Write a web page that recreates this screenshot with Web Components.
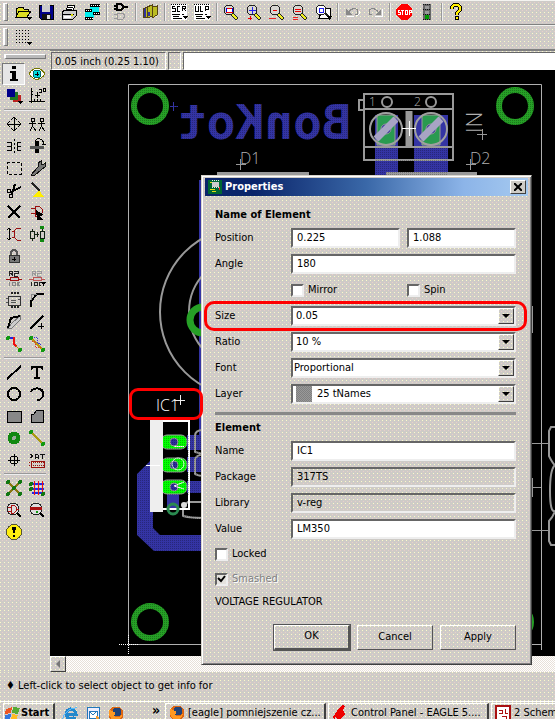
<!DOCTYPE html>
<html lang="en">
<head>
<meta charset="utf-8">
<title>Board editor</title>
<style>
  :root {
    --face: #ceccc6;
    --dither:
      conic-gradient(from 270deg at 1px 1px, #fbfac9 90deg, transparent 0) 0 0 / 4px 4px,
      conic-gradient(from 270deg at 1px 1px, #e9cdcb 90deg, transparent 0) 2px 2px / 4px 4px,
      #cecbc7;
    --light: #fff;
    --shade: #808080;
    --dark: #404040;
  }
  html, body { height: 100%; }
  body {
    margin: 0;
    overflow: hidden;
    font: 11px/14px "DejaVu Sans Condensed", "DejaVu Sans", sans-serif;
    color: #000;
  }
</style>
</head>
<body>
<eagle-app></eagle-app>

<script>
// 16x16 pixel icons
const zoomGlass = (mark) => `
  <circle cx="6" cy="6" r="5" fill="#d8d6d2" stroke="#222"/>
  <path d="M10 9l5 5-2 2-5-5z" fill="#ee2" stroke="#222"/>${mark}`;

const icons = {
  open: `<path d="M1 13V4h2l1-1h4l1 2h4v2M1 13l3-6h12l-4 6z" fill="#dd2" stroke="#000"/><path d="M12 13h5l-2.500 3z"/>`,
  save: `<path d="M1 1h14v14H3l-2-2z" fill="#008" stroke="#000"/><path d="M4 1h8v7H4z" fill="#ccc"/><path d="M4 10h9v5H4z" fill="#111"/><path d="M9 11h3v4H9z" fill="#ddd"/>`,
  print: `<path d="M5 7l2-6h7l-2 6" fill="#fff" stroke="#000"/><path d="M1 8l3-2h11v6l-3 3H1z" fill="#ccc" stroke="#000"/><path d="M2 10h11M7 3h5M6 5h5" stroke="#000"/><path d="M3 12h7v2H3z" fill="#fff"/><path d="M10 10h2v2h-2z" fill="#dd0"/>`,
  film: `<path d="M6 1h9v8H6zM1 7h9v7H1z" fill="#0ee"/><path d="M6 0h10v3H6zM1 5h7v3H1zM1 13h8v3H1zM9 8h7v3H9z" fill="#000"/><path d="M7 1.500h9M2 6.500h6M2 14.500h7M10 9.500h6" stroke="#fff" stroke-dasharray="1 1"/>`,
  gate: `<path d="M4 0h4l3 3-3 3H4zM1 2h3M1 5h3M11 3h4" fill="none" stroke="#000" stroke-width="1.500"/><path d="M4 9h6l2 3-2 3H4zM1 10h3M1 14h3" fill="none" stroke="#999"/>`,
  books: `<path d="M1 5l4-2v10l-3 1zM5 3l5-2v11l-4 2zM10 3l5-1v9l-5 3z" fill="#bb2" stroke="#541"/><path d="M2 5l2-1v9H2zM7 4l1 8H6z" fill="#339"/>`,
  scr: `<path d="M0 0h16v16H0z" fill="#fff"/><path d="M0 0h16" stroke="#000" stroke-dasharray="1 1"/><path d="M4 2H1v2h3v3H1M9 2H6v5h3M11 7V2h3v2h-3M12 4l3 3" fill="none" stroke="#000"/><path d="M1 10h8M11 10h2M2 12h6M2 14h9" stroke="#000"/><path d="M12 12h5l-2.500 3z"/>`,
  ulp: `<path d="M0 0h16v16H0z" fill="#fff"/><path d="M0 0h16" stroke="#000" stroke-dasharray="1 1"/><path d="M1 2v5h3V2M6 2v5h3M11 7V2h3v3h-3" fill="none" stroke="#000"/><path d="M1 10h8M11 10h2M2 12h6M2 14h9" stroke="#000"/><path d="M12 12h5l-2.500 3z"/>`,
  fit: zoomGlass(`<path d="M3 4h6v4H3z" fill="#fff" stroke="#e00"/><path d="M3 4v4M9 4v4" stroke="#00e"/>`),
  zin: zoomGlass(`<path d="M3 6h7M6 3v7" stroke="#22e"/><path d="M2 14h4M4 12v4" stroke="#e00"/>`),
  zout: zoomGlass(`<path d="M4 6h4" stroke="#e00"/><path d="M0 14h7" stroke="#e22"/>`),
  zredraw: zoomGlass(`<path d="M3 5h6M3 7h6" stroke="#e00"/><path d="M1 13h5M1 15h5" stroke="#e22"/>`),
  zselect: `<path d="M8 4h7v10H4z" fill="#fff" stroke="#000"/><circle cx="6" cy="6" r="5" fill="#fff" stroke="#222"/><path d="M4 4h4v4H4z" fill="#fff" stroke="#22e"/><path d="M10 9l4 4" stroke="#222" stroke-width="2"/><path d="M12 12h5l-2.500 4z"/>`,
  undo: `<path d="M2 5v6h6z" fill="#888"/><path d="M5 8c3-5 9-4 9 0 0 2-1 3-3 3" fill="none" stroke="#888"/><path d="M3 12h7M12 12c3-1 4-3 3-5" fill="none" stroke="#fff"/>`,
  redo: `<path d="M14 5v6H8z" fill="#888"/><path d="M11 8C8 3 2 4 2 8c0 2 1 3 3 3" fill="none" stroke="#888"/><path d="M15 5v7H8" fill="none" stroke="#fff"/>`,
  stop: `<path d="M5 0h6l5 5v6l-5 5H5l-5-5V5z" fill="#f00"/><path d="M4 6H2v2h2v2H2M5 6h3M6.500 6v5M9 6h2v4H9zM13 11V6h2v2h-2" fill="none" stroke="#fff"/>`,
  light: `<path d="M4 0h8v16H4z" fill="#666"/><path d="M4 .5h8M4 15.500h8M4 5h8M4 10h8" stroke="#111" stroke-dasharray="1 1"/><path d="M6 2h4v3H6zM6 7h4v3H6z" fill="#999"/><path d="M6 11h4v4H6z" fill="#090"/>`,
  help: `<path d="M4 5V3l2-2h4l2 2v3L9 9v2" fill="none" stroke="#000" stroke-width="4"/><path d="M4 5V3l2-2h4l2 2v3L9 9v2" fill="none" stroke="#fe0" stroke-width="2"/><path d="M7 12h4v4H7z"/><path d="M8 13h2v2H8z" fill="#fe0"/>`,
  grid: `<g stroke="#000" stroke-dasharray="1 2"><path d="M1 1.500h14M1 4.500h14M1 7.500h14M1 10.500h14M1 13.500h12"/></g><path d="M12 13h5l-2.500 3z"/>`,
  info: `<path d="M6 0h4v3H6zM4 5h6v8h2v2H4v-2h2V7H4z"/>`,
  show: `<path d="M0 8c5-8 11-8 16 0-5 7-11 7-16 0z" fill="#fff" stroke="#770"/><circle cx="8" cy="8" r="4" fill="#0dd" stroke="#066"/><path d="M6 8h4M8 6v4" stroke="#000"/>`,
  display: `<path d="M7 7h8v7H7z" fill="#b22"/><path d="M4 4h8v8H4z" fill="#272"/><path d="M1 1h8v8H1z" fill="#008"/><path d="M11 13h6l-3 3z"/>`,
  mark: `<path d="M2 0v15M0 13h16M2 3h2M2 6h2M5 13v-2M8 13v-2M11 13v-2M6 7h5M8.500 4v6M10 1h2v3h-2M14 0h2v3h-2z" fill="none" stroke="#000"/>`,
  move: `<path d="M8 1v14M1 8h14M5 4l3-3 3 3M5 12l3 3 3-3M4 5L1 8l3 3M12 5l3 3-3 3" fill="none" stroke="#000"/>`,
  copy: `<path d="M2 2h3v3H2zM3.500 5v6M0 7h7M3.500 10L1 15M3.500 10L7 15M11 2h3v3h-3zM12.500 5v6M9 7h7M12.500 10L10 15M12.500 10l3 5" fill="none" stroke="#000"/>`,
  mirror: `<path d="M8 1v14" stroke="#000" stroke-dasharray="2 2"/><path d="M1 4h4v8H1M1 8h4M15 4h-4v8h4M15 8h-4" fill="none" stroke="#000"/>`,
  rotate: `<path d="M6 3h4v12H6z"/><path d="M1 8h14v3H1z" fill="#555"/><path d="M8 1c4-1 7 2 7 6M6 3l3-3M13 6h4" fill="none" stroke="#000"/>`,
  group: `<path d="M1 2h14v12H1z" fill="none" stroke="#000" stroke-dasharray="3 2"/>`,
  change: `<path d="M2 15l7-8V3l3-2v3l2 1 2-2v4l-4 3-7 6z" fill="#777" stroke="#111"/>`,
  cut: `<path d="M15 5L5 10M9 2L6 12" stroke="#000" stroke-width="2"/><circle cx="3" cy="9" r="2" fill="none" stroke="#000"/><circle cx="5" cy="14" r="2" fill="none" stroke="#000"/>`,
  paste: `<path d="M3 1l8 8" stroke="#222" stroke-width="2"/><path d="M3 15l7-7 5 7z" fill="#fe0"/>`,
  del: `<path d="M2 2l12 12M14 2L2 14" stroke="#000" stroke-width="2"/>`,
  add: `<path d="M2 4h4V2h4l3 3v4M2 9h4v3h4M6 4v8" fill="none" stroke="#911"/><path d="M7 6l8 5-4 1 3 4H8z"/>`,
  pinswap: `<path d="M3 2v12M1 4l2-2 2 2M1 12l2 2 2-2" fill="none" stroke="#000"/><path d="M15 2h-4l-3 3v6l3 3h4M8 5H6M8 11H6" fill="none" stroke="#911"/>`,
  replace: `<path d="M1 5h4v7H1zM11 5h4v7h-4zM3 3v2M3 12v3M6 8h4M8 6v5M13 3v2M13 12v3" fill="none" stroke="#121"/><path d="M11 0h4v3h-4zM11 13h4v3h-4z" fill="#181"/>`,
  lock: `<path d="M5 8V4l2-2h2l2 2v4" fill="none" stroke="#555" stroke-width="2"/><path d="M3 7h10v7H3z" fill="#777" stroke="#333"/><path d="M8 9v4M6 11h4" stroke="#000"/>`,
  name: `<path d="M3 6V1h3v2H3M5 3l2 3M8 1h4v2.500H8V6h4" fill="none" stroke="#222"/><path d="M0 9h16" stroke="#911"/><path d="M4 7.500h8v3H4z" fill="#ccc" stroke="#911"/><path d="M3 12v4M6 12h3v3H6zM11 12v4M14 12l-3 2 3 2" fill="none" stroke="#888"/>`,
  value: `<path d="M3 6V1h3v2H3M5 3l2 3M8 1h4v2.500H8V6h4" fill="none" stroke="#999"/><path d="M0 9h16" stroke="#b55"/><path d="M4 7.500h8v3H4z" fill="#ccc" stroke="#b55"/><path d="M2 12v4M5 12h3v3H5zM10 12v4M12 12l-2 2 2 2" fill="none" stroke="#222"/><path d="M12 12h5l-2.500 4z"/>`,
  smash: `<path d="M2 4h12v9H2z" fill="none" stroke="#333"/><path d="M5 8h5M5 10h5M0 6h2M0 10h2M12 7h2" stroke="#555"/><path d="M5 1h9M5 15h9" stroke="#222" stroke-width="2" stroke-dasharray="2 1"/>`,
  miter: `<path d="M2 15V9l6-7h7" fill="none" stroke="#000" stroke-width="2"/><path d="M2 8V2h6" fill="none" stroke="#888"/>`,
  split: `<path d="M2 14h4l8-8V2L6 9z" fill="#ccc" stroke="#777"/><path d="M2 14L5 4l9-2" fill="none" stroke="#000" stroke-width="2"/>`,
  optimize: `<path d="M1 15L14 2" stroke="#000" stroke-width="2"/><path d="M9 12h6M12 9v6" stroke="#000"/>`,
  route: `<path d="M2 2h5" stroke="#22d" stroke-width="2"/><path d="M8 1v7l3 3" fill="none" stroke="#e11" stroke-width="2"/><path d="M10 10l4 4" stroke="#a90"/><circle cx="2" cy="2" r="2" fill="#191"/><circle cx="14" cy="14" r="2" fill="#191"/>`,
  ripup: `<path d="M2 2l12 12" stroke="#b91" stroke-width="2"/><path d="M5 1h3v5l5 4" fill="none" stroke="#33d" stroke-dasharray="1 1"/><path d="M3 5h3v6h6" fill="none" stroke="#d33" stroke-dasharray="1 1"/><circle cx="2" cy="2" r="2" fill="#191"/><circle cx="14" cy="14" r="2" fill="#191"/>`,
  wire: `<path d="M1 15L15 2" stroke="#000" stroke-width="2"/>`,
  text: `<path d="M2 2h12v4h-1l-1-2H9v9h2v2H5v-2h2V4H4L3 6H2z"/>`,
  circle: `<circle cx="8" cy="8" r="6" fill="none" stroke="#000" stroke-width="2"/>`,
  arc: `<path d="M2 6c2-5 12-5 12 2 0 4-3 6-6 6" fill="none" stroke="#000" stroke-width="2"/>`,
  rect: `<path d="M1 3h14v11H1z" fill="#888" stroke="#000"/>`,
  polygon: `<path d="M2 14V7l3-1 3-4h6v12z" fill="#888" stroke="#000"/>`,
  via: `<circle cx="8" cy="8" r="6.500" fill="#181"/><circle cx="8" cy="8" r="2" fill="#9a9"/>`,
  signal: `<path d="M2 2l12 12" stroke="#a91" stroke-width="2"/><circle cx="2" cy="2" r="2" fill="#191"/><circle cx="14" cy="14" r="2" fill="#191"/>`,
  hole: `<circle cx="8" cy="8" r="4" fill="none" stroke="#000"/><path d="M8 2v12M2 8h12" stroke="#000"/>`,
  attribute: `<path d="M1 2l3 2-3 2M6 7V3l2-1 1 1v4M6 5h3M11 2h5M13.500 2v5" fill="none" stroke="#111"/><path d="M2 9h13v6H2z" fill="none" stroke="#911"/><path d="M0 10.500h16M0 13.500h16" stroke="#911" stroke-dasharray="1 1"/>`,
  ratsnest: `<path d="M2 2l12 12M14 2L2 14" stroke="#871" stroke-width="1.500"/><g fill="#171"><circle cx="2" cy="2" r="2"/><circle cx="14" cy="2" r="2"/><circle cx="8" cy="8" r="2"/><circle cx="2" cy="14" r="2"/><circle cx="14" cy="14" r="2"/></g>`,
  auto: `<path d="M3 4h12M3 9h12M3 13h12" stroke="#22e" stroke-width="2"/><path d="M5 1v14M9 1v14M13 1v14" stroke="#e11"/><g fill="#171"><circle cx="2" cy="4" r="2"/><circle cx="2" cy="9" r="2"/><circle cx="14" cy="14" r="2"/></g>`,
  erc: `<circle cx="7" cy="7" r="6" fill="#ddd" stroke="#222"/><path d="M2 5h3M2 9h3M5 3v8h3l2-2V5L8 3zM10 7h3" fill="none" stroke="#a11"/><path d="M11 11l4 4" stroke="#000" stroke-width="2"/>`,
  drc: `<circle cx="7" cy="7" r="6" fill="#ddd" stroke="#222"/><path d="M1 6h12" stroke="#a11" stroke-width="3"/><circle cx="8" cy="10" r="1.500" fill="#191"/><path d="M11 11l4 4" stroke="#000" stroke-width="2"/>`,
  errors: `<circle cx="8" cy="8" r="7.500" fill="#fe1" stroke="#553"/><path d="M6 3h4L9 9H7zM7 11h2v2H7z"/>`,
  board: `<path d="M0 0h16v16H0z" fill="#063"/><path d="M5 2h7v6H5z" fill="#ccc"/><path d="M5 1h7M5 8h7" stroke="#fff" stroke-dasharray="1 1"/><path d="M2 3h2M2 11h6M4 13h5" stroke="#fe1"/><path d="M12 8h2v3h-2z" fill="#e22"/>`,
  windows: `<path d="M1 4l6-2-1 6-6 1z" fill="#e52"/><path d="M8 2l7 1-2 6-6-1z" fill="#5a3"/><path d="M0 10l6-1-1 6-5 1z" fill="#37d"/><path d="M7 9l6 1-2 6-5-1z" fill="#fb2"/>`,
  ie: `<path d="M13 11a5 5 0 1 1 1-3H4" fill="none" stroke="#28c" stroke-width="3"/><path d="M1 14C0 9 8 1 15 2" fill="none" stroke="#5bf"/>`,
  mail: `<path d="M2 1h12v14H2z" fill="#eef" stroke="#27b"/><path d="M4 5h8v7H4z" fill="#fff" stroke="#27b"/><path d="M4 5l4 4 4-4" fill="none" stroke="#27b"/><path d="M12 9l4 6h-6z" fill="#e93"/>`,
  firefox: `<circle cx="8" cy="8" r="7.500" fill="#d61"/><circle cx="9" cy="6" r="4.500" fill="#247"/><path d="M1 4c3 0 3 2 6 2 1 2-1 2-1 4 3 3 6 1 8-2 0 5-4 7-7 7S0 10 1 4z" fill="#f92"/>`,
  eagle: `<path d="M10 0l3 1-2 4 2 4-3 4-4 2-3-3 1 4-3-4 4-6z" fill="#e00"/>`,
  schematic: `<path d="M1 1h14v14H1z" fill="#fff" stroke="#a11" stroke-width="2"/><path d="M4 5h3v3H4M10 4v4h3M7 11h4v3" fill="none" stroke="#a11"/>`,
};

class PixelIcon extends HTMLElement {
  connectedCallback() {
    this.attachShadow({ mode: "open" }).innerHTML = `
      <style>
        :host { display: inline-block; width: 16px; height: 16px; flex: none; }
        svg { display: block; width: 100%; height: 100%; overflow: visible; shape-rendering: crispEdges; }
      </style>
      <svg viewBox="0 0 16 16" aria-hidden="true">${icons[this.getAttribute("name")]}</svg>`;
  }
}

// Toolbar: "tools" is a space separated list of icon names, "|" makes a separator, "-" an empty cell
class ToolBar extends HTMLElement {
  connectedCallback() {
    const pressed = this.getAttribute("pressed");
    const items = this.getAttribute("tools").split(" ").map((t) => {
      if (t === "|") return `<i></i>`;
      if (t === "-") return `<span></span>`;
      return `<button type="button" aria-label="${t}"${t === pressed ? ' class="on"' : ""}><pixel-icon name="${t}"></pixel-icon></button>`;
    });
    this.attachShadow({ mode: "open" }).innerHTML = `
      <style>
        :host { display: flex; align-items: center; height: 25px; box-sizing: border-box; padding-left: 3px;
                background: var(--dither); border-bottom: 1px solid var(--shade); box-shadow: inset 0 1px #f4f4f0; }
        b { width: 5px; height: 18px; margin-right: 3px; border: 1px solid; box-sizing: border-box;
            border-color: #fff #777 #777 #fff; border-left-width: 2px; background: #bbb; }
        button { width: 23px; height: 22px; padding: 0; border: 0; background: none;
                 display: flex; align-items: center; justify-content: center; }
        i { width: 1px; height: 18px; margin: 0 2px 0 3px; background: #999; box-shadow: 1px 0 #eee; }
        :host([vertical]) { display: grid; grid-template-columns: 23px 23px; align-content: start;
                            height: auto; padding: 4px 0 0 2px; border: 0; box-shadow: none; }
        :host([vertical]) b { grid-column: span 2; width: 42px; height: 5px; margin: 0 2px 4px; }
        :host([vertical]) i { grid-column: span 2; width: 42px; height: 1px; margin: 2px 2px 3px; box-shadow: 0 1px #eee; }
        .on { background: #e6e6e6; border: 1px solid; border-color: #777 #fff #fff #777; }
      </style>
      <b></b>${items.join("")}`;
  }
}

class CoordBar extends HTMLElement {
  connectedCallback() {
    this.attachShadow({ mode: "open" }).innerHTML = `
      <style>
        :host { display: flex; gap: 2px; height: 20px; box-sizing: border-box; padding: 1px 0 0 1px;
                background: var(--dither); border-top: 1px solid var(--shade); }
        div, input { border: 1px solid; border-color: #666 #fff #fff #666; box-sizing: border-box; }
        .pos { width: 115px; padding: 2px 3px; white-space: nowrap; }
        .gap { width: 13px; }
        input { flex: 1; min-width: 0; padding: 0 4px; font: inherit; background: #fff; border-right: 0; }
      </style>
      <div class="pos"><slot></slot></div>
      <div class="gap"></div>
      <input type="text" aria-label="Command">`;
  }
}

class BoardView extends HTMLElement {
  connectedCallback() {
    const ring = (x, y) => `<circle cx="${x}" cy="${y}" r="16" fill="none" stroke="#26a026" stroke-width="6"/>`;
    const screw = (x) => `
      <path d="M${x - 9} 115h18v30h-18z" fill="#2a9a50"/>
      <circle cx="${x}" cy="129" r="5" fill="#2e2e9c"/>
      <path d="M${x - 10} 139l20-20" stroke="#a8a4c4" stroke-width="7"/>
      <circle cx="${x}" cy="129" r="16" fill="none" stroke="#a0a0a0" stroke-width="2"/>`;
    const pad = (y) => `
      <rect x="161" y="${y}" width="26" height="14" rx="6" fill="#0f0"/>
      <circle cx="174" cy="${y + 7}" r="4" fill="#2e2e9c"/>`;
    this.attachShadow({ mode: "open" }).innerHTML = `
      <style>
        :host { display: block; background: #000; overflow: hidden; min-height: 0; }
        svg { display: block; width: 100%; height: 100%; }
        text { font-family: "Open Sans", sans-serif; font-weight: 300; font-size: 16px; fill: #b0b0b0; }
        .name { font: bold 48px "DejaVu Sans Mono", monospace; fill: #3434a4; }
      </style>
      <svg role="img" aria-label="Board">
        <defs>
          <pattern id="dots" width="2" height="2" patternUnits="userSpaceOnUse"><path d="M0 0h1v1H0z" fill="#000" fill-opacity=".25"/></pattern>
        </defs>
        <g transform="translate(-50 -70)" fill="none" stroke="#999">
          <g stroke="none" fill="#3434a4">
            <path d="M375 115h23v60h-23zM414 115h34v60h-34z"/>
            <path d="M187 435h16v15h-16zM187 457h16v15h-16zM187 481h16v12h-16zM167 494h12v14h-12zM199 180h4v270h-4z"/>
            <path d="M163 457l-13 4-13 13v61l17 16h50v-16h-44l-7-7v-60l10-3z"/>
          </g>
          <path d="M541.500 650V84.500H128.500V644.500H541" stroke="#b0b0b0"/>
          <path d="M119 644.500h20M128.500 635v20" stroke="#fff" stroke-dasharray="1 1"/>
          ${ring(150, 106)}${ring(515, 106)}${ring(150, 622)}${ring(515, 622)}
          <circle cx="245" cy="312" r="85" stroke-width="2"/>
          <circle cx="245" cy="312" r="56" stroke-width="2"/>
          <circle cx="203" cy="320" r="13" stroke="#26a026" stroke-width="7"/>
          <path d="M170 106.500h8M173.500 102v9" stroke="#3434a4"/>
          <text class="name" stroke="none" transform="translate(351 139) scale(-1 1)">BonKot</text>
          <path d="M364 94h89v66h-89zM364 109h89M364 147h89M364 100h-5v10h5" stroke-width="2"/>
          <path d="M409 111v36" stroke-width="7"/>
          <circle cx="387" cy="102" r="5" stroke-width="2"/>
          <circle cx="431" cy="102" r="5" stroke-width="2"/>
          ${screw(386)}${screw(431)}
          <path d="M402 128.500h14M409.500 121v15" stroke="#fff"/>
          <g stroke="none">
            <text x="369" y="106" style="font-size:12px">1</text>
            <text x="414" y="106" style="font-size:12px">2</text>
            <text x="240" y="164">D1</text>
            <text x="470" y="164">D2</text>
            <text transform="translate(482 133) rotate(-90)" style="font-size:22px">IN</text>
          </g>
          <path d="M236 164.500h10M240.500 159v11M466 164.500h10M470.500 159v11M477 134.500h10M482.500 129v11"/>
          <path d="M217 173.500h92M386 173.500h91" stroke-width="3"/>
          <path d="M203 430q-8 0-8 6v16q8 2 8 2q-8 2-8 6v14q4 2 8 2M203 502h-15l-5 4v10q8 2 20 2" stroke-width="2"/>
          ${pad(435)}${pad(458)}${pad(480)}
          <path d="M150 420h13v92h-13z" fill="#eee" stroke="none"/>
          <path d="M163 421h26v88h-26" stroke="#fff" stroke-width="2"/>
          <path d="M146 465.500h14M174 446.500h10M184 489l-10-3 10-4" stroke="#fff"/>
          <circle cx="178" cy="464" r="6" stroke="#dfd"/>
          <circle cx="173" cy="509" r="5" stroke="#2a8a50" stroke-width="3"/>
          <circle cx="184" cy="505" r="3" fill="#ddd" stroke="none"/>
          <g stroke="none"><text x="156" y="411" style="fill:#fff">IC1</text></g>
          <path d="M174 400.500h11M180.500 395v10" stroke="#eee"/>
          <path d="M532 443.500h16M532 530.500h16M532.500 306v27M532.500 478v19M532 487.500h9"/>
          <path d="M555 427h-4l-2 4v25q4 8 6 9q-5 4-5 26t5 20q-2 6-6 10v20l2 4h4" stroke-width="2"/>
          <path d="M130 86h38v40h-38zM174 104h178v38H174zM136 435h14v120h-14zM150 515h53v38h-53zM164 435h37v60h-37zM375 147h73v28h-73zM130 600h44v43h-44zM495 86h44v40h-44z" fill="url(#dots)" stroke="none"/>
        </g>
      </svg>`;
  }
}

class ScrollStrip extends HTMLElement {
  connectedCallback() {
    this.attachShadow({ mode: "open" }).innerHTML = `
      <style>
        :host { display: block; height: 16px; background: repeating-conic-gradient(#fff 0 25%, #e8e0d8 0 50%) 0 0 / 2px 2px; }
        button { display: block; width: 16px; height: 16px; padding: 0; background: var(--dither);
                 border: 1px solid; border-color: #fff var(--dark) var(--dark) #fff; }
        svg { display: block; margin: auto; }
      </style>
      <button type="button" aria-label="Scroll left"><svg width="8" height="8"><path d="M6 0v8L2 4z" fill="#777"/></svg></button>`;
  }
}

const boxStyle = `
  input, select {
    box-sizing: border-box; width: 100%; min-width: 0; height: 20px; margin: 0; padding: 0 4px 1px;
    font: inherit; color: #000; background: #fff; border-radius: 0;
    border: 2px solid; border-color: #666 #eee #eee #666; outline: 0; appearance: none;
  }`;

// Label with one or two text boxes
class PropField extends HTMLElement {
  connectedCallback() {
    const label = this.getAttribute("label");
    const values = this.getAttribute("value").split(" ");
    const ro = this.hasAttribute("readonly") ? "readonly" : "";
    const inputs = values.map((v, i) =>
      `<input type="text" value="${v}" ${ro} ${i ? `aria-label="${label} ${i + 1}"` : 'id="box"'}>`);
    this.attachShadow({ mode: "open" }).innerHTML = `
      <style>
        :host { display: grid; grid-template-columns: 76px 1fr; align-items: center; }
        div { display: flex; gap: 7px; }
        ${boxStyle}
        input[readonly] { background: var(--dither); }
      </style>
      <label for="box">${label}</label><div>${inputs.join("")}</div>`;
  }
}

class PropSelect extends HTMLElement {
  connectedCallback() {
    const swatch = this.hasAttribute("swatch");
    this.attachShadow({ mode: "open" }).innerHTML = `
      <style>
        :host { display: grid; grid-template-columns: 76px 1fr; align-items: center; }
        ${boxStyle}
        .wrap { display: grid; align-items: center; }
        .wrap > * { grid-area: 1 / 1; }
        select { padding: 0 20px 1px ${swatch ? 24 : this.getAttribute("inset") || 3}px; }
        .swatch { width: 16px; height: 16px; margin-left: 5px; pointer-events: none;
                  background: repeating-conic-gradient(#999 0 25%, #808080 0 50%) 0 0 / 2px 2px; }
        .arrow { justify-self: end; width: 16px; height: 16px; margin-right: 2px; box-sizing: border-box; pointer-events: none;
                 background: var(--dither); border: 1px solid; border-color: #fff var(--dark) var(--dark) #fff; }
        .arrow svg { display: block; margin: 5px auto; }
      </style>
      <label for="box">${this.getAttribute("label")}</label>
      <div class="wrap">
        <select id="box"><option>${this.getAttribute("value")}</option></select>
        ${swatch ? '<span class="swatch"></span>' : ""}
        <span class="arrow"><svg width="8" height="4"><path d="M0 0h8L4 4z"/></svg></span>
      </div>`;
  }
}

class PropCheck extends HTMLElement {
  connectedCallback() {
    const flags = ["checked", "disabled"].filter((f) => this.hasAttribute(f)).join(" ");
    this.attachShadow({ mode: "open" }).innerHTML = `
      <style>
        :host { display: block; }
        label { display: flex; align-items: center; gap: 4px; }
        input { appearance: none; width: 13px; height: 13px; margin: 0; box-sizing: border-box; background: #fff;
                border: 2px solid; border-color: #666 #eee #eee #666; }
        .box { display: grid; place-items: center; }
        .box > * { grid-area: 1 / 1; }
        svg { display: none; }
        :checked + svg { display: block; }
        :host([disabled]) input { background: #e4e2de; }
        :host([disabled]) label { color: #808080; text-shadow: 1px 1px #fff; }
      </style>
      <label><span class="box"><input type="checkbox" ${flags}><svg width="9" height="9"><path d="M1 3l3 3 4-5" fill="none" stroke="#000" stroke-width="2"/></svg></span><slot></slot></label>`;
  }
}

class PushButton extends HTMLElement {
  connectedCallback() {
    this.attachShadow({ mode: "open" }).innerHTML = `
      <style>
        :host { display: block; }
        button { width: 76px; height: 25px; padding: 0 0 2px; font: inherit; color: #000; background: var(--dither);
                 border: 1px solid; border-color: #fff #555 #555 #fff; border-radius: 0; }
        :host([default]) button { border-right-width: 2px; border-bottom-width: 2px; outline: 1px solid #555; }
      </style>
      <button type="button"><slot></slot></button>`;
  }
}

class PropertiesDialog extends HTMLElement {
  connectedCallback() {
    this.attachShadow({ mode: "open" }).innerHTML = `
      <style>
        :host { display: block; box-sizing: border-box; background: var(--dither); padding: 2px 3px 14px;
                border: 1px solid; border-color: #d8d4cc #404040 #404040 #d8d4cc;
                box-shadow: inset 1px 1px #fff, inset -1px -1px #808080; }
        header { display: flex; align-items: center; height: 18px; padding: 0 2px 0 3px;
                 color: #fff; font-weight: bold; background: linear-gradient(90deg, #0a246a 15%, #3a68a8 50%, #8cb4e8 80%, #a6caf0); }
        header span { flex: 1; padding-left: 3px; }
        pixel-icon { width: 14px; height: 14px; }
        header button { width: 16px; height: 14px; padding: 0; border: 1px solid; border-color: #fff #404040 #404040 #fff; background: var(--face); }
        header svg { display: block; margin: auto; }
        form { display: flex; flex-direction: column; gap: 6px; padding: 12px 12px 0 10px; }
        h2 { margin: 0; font: inherit; font-weight: bold; }
        .checks { display: grid; grid-template-columns: 1fr 1fr; height: 20px; align-items: center; margin-left: 76px; gap: 7px; }
        hr { width: 100%; height: 3px; margin: 2px 0 0; border: 0; background: #888; }
        .foot { display: flex; justify-content: flex-end; gap: 7px; margin-top: 10px; }
        .single { padding: 2px 0 3px; }
        p { margin: 0; }
        .mark { position: relative; }
        .mark::after { content: ""; position: absolute; inset: -5px -11px; border: 3px solid #f00; border-radius: 10px; pointer-events: none; }
      </style>
      <header>
        <pixel-icon name="board"></pixel-icon><span>Properties</span>
        <button type="button" aria-label="Close"><svg width="8" height="8"><path d="M0 0l8 8M8 0L0 8" stroke="#000" stroke-width="2"/></svg></button>
      </header>
      <form>
        <h2>Name of Element</h2>
        <prop-field label="Position" value="0.225 1.088"></prop-field>
        <prop-field label="Angle" value="180"></prop-field>
        <div class="checks"><prop-check>Mirror</prop-check><prop-check>Spin</prop-check></div>
        <prop-select class="mark" label="Size" value="0.05"></prop-select>
        <prop-select label="Ratio" value="10 %"></prop-select>
        <prop-select label="Font" value="Proportional" inset="1"></prop-select>
        <prop-select label="Layer" value="25 tNames" swatch></prop-select>
        <hr>
        <h2>Element</h2>
        <prop-field label="Name" value="IC1"></prop-field>
        <prop-field label="Package" value="317TS" readonly></prop-field>
        <prop-field label="Library" value="v-reg" readonly></prop-field>
        <prop-field label="Value" value="LM350"></prop-field>
        <prop-check class="single">Locked</prop-check>
        <prop-check class="single" checked disabled>Smashed</prop-check>
        <p>VOLTAGE REGULATOR</p>
        <div class="foot">
          <push-button default>OK</push-button><push-button>Cancel</push-button><push-button>Apply</push-button>
        </div>
      </form>`;
  }
}

class TaskBar extends HTMLElement {
  connectedCallback() {
    this.attachShadow({ mode: "open" }).innerHTML = `
      <style>
        :host { display: flex; align-items: flex-start; height: 18px; box-sizing: border-box; padding: 1px 0 0 3px; overflow: hidden;
                background: var(--dither); border-top: 1px solid #fff; }
        button { display: flex; align-items: center; gap: 3px; height: 20px; padding: 0 2px; font: inherit; color: #000; white-space: nowrap;
                 background: var(--dither); border: 1px solid; border-color: #fff #404040 #404040 #fff; border-right-width: 2px; }
        .start { font-weight: bold; width: 52px; flex: none; gap: 0; padding: 0 1px; }
        nav { display: flex; flex: none; gap: 7px; padding: 3px 0 0 7px; width: 97px; box-sizing: border-box; }
        .more { flex: none; font-size: 14px; font-weight: bold; width: 13px; line-height: 14px; }
        .task { width: 161px; flex: none; margin-right: 2px; padding-left: 3px; gap: 3px; }
      </style>
      <button class="start" type="button"><pixel-icon name="windows"></pixel-icon>Start</button>
      <nav><pixel-icon name="ie"></pixel-icon><pixel-icon name="mail"></pixel-icon><pixel-icon name="firefox"></pixel-icon></nav>
      <span class="more">»</span>
      <button class="task" type="button"><pixel-icon name="firefox"></pixel-icon>[eagle] pomniejszenie cz...</button>
      <button class="task" type="button"><pixel-icon name="eagle"></pixel-icon>Control Panel - EAGLE 5....</button>
      <button class="task" type="button"><pixel-icon name="schematic"></pixel-icon>2 Schem</button>`;
  }
}

class EagleApp extends HTMLElement {
  connectedCallback() {
    this.attachShadow({ mode: "open" }).innerHTML = `
      <style>
        :host { display: flex; flex-direction: column; height: 100%; position: relative; background: var(--dither); overflow: hidden; }
        main { flex: 1; min-height: 0; display: grid; grid-template-columns: 50px 1fr; }
        section { display: flex; flex-direction: column; min-height: 0; min-width: 0; }
        board-view { flex: 1; }
        footer { height: 29px; box-sizing: border-box; padding: 7px 6px; background: var(--dither); }
        properties-dialog { position: absolute; left: 201px; top: 175px; width: 331px; }
        .callout { position: absolute; left: 129px; top: 388px; width: 74px; height: 32px; box-sizing: border-box;
                   border: 3px solid #f00; border-radius: 9px; pointer-events: none; }
      </style>
      <tool-bar tools="open save print film | gate | books | scr ulp | fit zin zout zredraw zselect | undo redo | stop light | help"></tool-bar>
      <tool-bar tools="grid"></tool-bar>
      <main>
        <tool-bar vertical pressed="info" tools="info show display mark | move copy mirror rotate group change cut paste del add pinswap replace lock - name value smash miter split optimize route ripup | wire text circle arc rect polygon via signal hole attribute | ratsnest auto erc drc errors"></tool-bar>
        <section>
          <coord-bar>0.05 inch (0.25 1.10)</coord-bar>
          <board-view></board-view>
          <scroll-strip></scroll-strip>
        </section>
      </main>
      <footer>♦ Left-click to select object to get info for</footer>
      <task-bar></task-bar>
      <properties-dialog></properties-dialog>
      <div class="callout"></div>`;
  }
}

customElements.define("pixel-icon", PixelIcon);
customElements.define("tool-bar", ToolBar);
customElements.define("coord-bar", CoordBar);
customElements.define("board-view", BoardView);
customElements.define("scroll-strip", ScrollStrip);
customElements.define("prop-field", PropField);
customElements.define("prop-select", PropSelect);
customElements.define("prop-check", PropCheck);
customElements.define("push-button", PushButton);
customElements.define("properties-dialog", PropertiesDialog);
customElements.define("task-bar", TaskBar);
customElements.define("eagle-app", EagleApp);
</script>
</body>
</html>
